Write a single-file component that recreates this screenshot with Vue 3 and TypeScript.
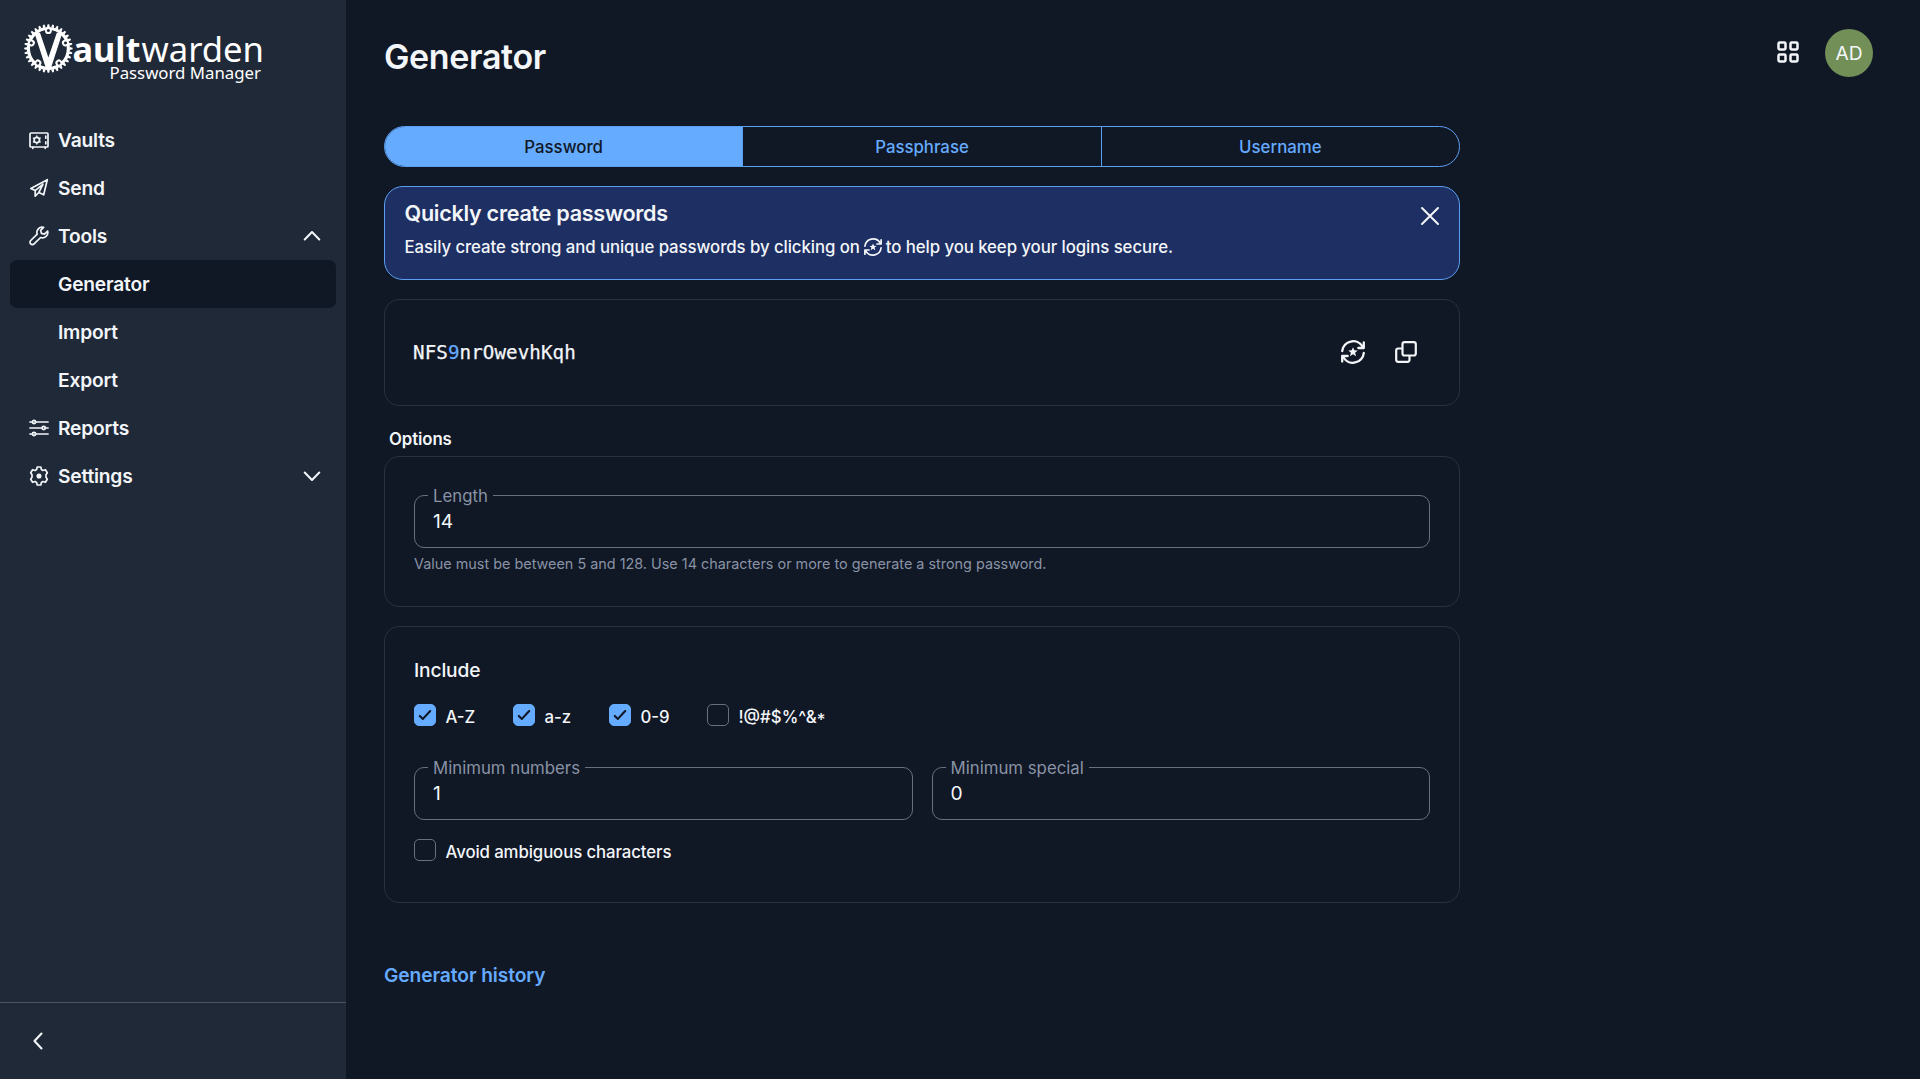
<script setup lang="ts">
interface NavItem { label: string; icon?: string; sub?: boolean; active?: boolean; arrow?: 'up' | 'down' }
const nav: NavItem[] = [
  { label: 'Vaults', icon: 'vault' },
  { label: 'Send', icon: 'send' },
  { label: 'Tools', icon: 'wrench', arrow: 'up' },
  { label: 'Generator', sub: true, active: true },
  { label: 'Import', sub: true },
  { label: 'Export', sub: true },
  { label: 'Reports', icon: 'sliders' },
  { label: 'Settings', icon: 'cog', arrow: 'down' },
]
const tabs = ['Password', 'Passphrase', 'Username']
const password = 'NFS9nrOwevhKqh'.split('')
const charsets = [
  { label: 'A-Z', on: true, w: 99 },
  { label: 'a-z', on: true, w: 96 },
  { label: '0-9', on: true, w: 98 },
  { label: '!@#$%^&*', on: false, w: 150 },
]
const teeth = Array.from({ length: 32 }, (_, i) => (i * 360) / 32)
const bolts = [0, 72, 144, 216, 288]
</script>

<template>
  <div class="app">
    <aside class="side">
      <svg class="logo" width="346" height="116" viewBox="0 0 346 116" fill="#fff">
        <g transform="translate(48.4 48.5)">
          <circle r="20" fill="none" stroke="#fff" stroke-width="3.2" />
          <path v-for="a in teeth" :key="a" d="M-1.5-21.200L-.8-24.200H.8L1.500-21.200Z" :transform="`rotate(${a})`" />
          <g v-for="b in bolts" :key="b" :transform="`rotate(${b})`">
            <circle cy="-17.800" r="3.400" />
            <circle cy="-18" r="1.500" fill="#202938" />
          </g>
          <path d="M-14-15.800H-8.400L0 9L8.400-15.800H14L2.600 19.500H-2.600Z" />
        </g>
        <text class="brand" x="72.500" y="61.500" textLength="68" lengthAdjust="spacingAndGlyphs" font-weight="700">ault</text>
        <text class="brand" x="141.500" y="61.500" textLength="122.500" lengthAdjust="spacingAndGlyphs">warden</text>
        <text class="tag" x="109.500" y="78.500" textLength="151.500" lengthAdjust="spacingAndGlyphs">Password Manager</text>
      </svg>
      <nav>
        <a v-for="n in nav" :key="n.label" class="row" :class="{ active: n.active }">
          <svg class="ico" width="20" height="20" viewBox="0 0 20 20" fill="none" stroke="#f3f6f9" stroke-width="1.7" stroke-linecap="round" stroke-linejoin="round">
            <template v-if="n.icon === 'vault'">
              <rect x="1" y="3" width="18" height="14" rx="1" />
              <path d="M3.8 17.3v1M16.2 17.3v1M16.8 6.2v2M16.8 11.8v2" />
              <circle cx="7.8" cy="10" r="2.7" />
              <path d="M7.8 6v1M7.8 13v1M4.3 8l.8.5M10.5 11.5l.8.5M4.3 12l.8-.5M10.5 8.5l.8-.5" stroke-width="1.3" />
            </template>
            <template v-else-if="n.icon === 'send'">
              <path d="M18.3 1.7L1.8 10.4l4.4 2.2v5.6l3.6-3.7 4.9 2.3zM6.2 12.6L14 6.2 9.8 14.5" />
            </template>
            <template v-else-if="n.icon === 'wrench'">
              <path d="M14.6 1.3a5.3 5.3 0 0 0-6.4 6.9L1.7 14.5a2.4 2.4 0 0 0 0 3.4 2.4 2.4 0 0 0 3.4 0l6.5-6.4a5.3 5.3 0 0 0 7-6.4l-3.2 3-3-.7-.8-3z" />
            </template>
            <template v-else-if="n.icon === 'sliders'">
              <path d="M1 4h2.6M6.4 4H19M1 10h12.2M16 10h3M1 16h2.6M6.4 16H19" />
              <circle cx="5" cy="4" r="1.6" /><circle cx="14.7" cy="10" r="1.6" /><circle cx="5" cy="16" r="1.6" />
            </template>
            <template v-else-if="n.icon === 'cog'">
              <path d="M8.2 1h3.6l.6 2.6 1.500.9 2.500-.8 1.900 3.100-1.300 1.900v2.600l1.300 1.900-1.900 3.100-2.500-.8-1.500.9-.6 2.600H8.200l-.6-2.600-1.500-.9-2.500.8-1.900-3.100 1.300-1.900V8.700l-1.300-1.900 1.900-3.100 2.500.8 1.500-.9z" />
              <circle cx="10" cy="10" r="1.700" fill="#f3f6f9" />
            </template>
          </svg>
          <span class="label">{{ n.label }}</span>
          <svg v-if="n.arrow" class="arrow" width="18" height="12" viewBox="0 0 18 12" fill="none" stroke="#f3f6f9" stroke-width="2" stroke-linecap="round" stroke-linejoin="round">
            <path :d="n.arrow === 'up' ? 'M1.700 9.500L9 2l7.300 7.500' : 'M1.700 2.500L9 10l7.300-7.500'" />
          </svg>
        </a>
      </nav>
      <div class="foot">
        <svg width="12" height="20" viewBox="0 0 12 20" fill="none" stroke="#f3f6f9" stroke-width="2.100" stroke-linecap="round" stroke-linejoin="round"><path d="M9.500 2.500L2.500 10l7 7.500" /></svg>
      </div>
    </aside>

    <main class="main">
      <header class="head">
        <h1>Generator</h1>
        <svg class="grid" width="22" height="22" viewBox="0 0 22 22" fill="none" stroke="#f3f6f9" stroke-width="2.500">
          <rect x="1.500" y="1.500" width="7" height="7" rx="1.200" /><rect x="13.500" y="1.500" width="7" height="7" rx="1.200" />
          <rect x="1.500" y="13.500" width="7" height="7" rx="1.200" /><rect x="13.500" y="13.500" width="7" height="7" rx="1.200" />
        </svg>
        <div class="avatar">AD</div>
      </header>

      <div class="content">
        <div class="tabs">
          <div v-for="(t, i) in tabs" :key="t" class="tab" :class="{ on: i === 0 }">{{ t }}</div>
        </div>

        <section class="banner">
          <div class="btext">
            <h2>Quickly create passwords</h2>
            <p>
              <span class="p1">Easily create strong and unique passwords by clicking on</span>
              <svg width="18" height="18" viewBox="0 0 24 24" fill="none" stroke="#f3f6f9" stroke-width="2.300" stroke-linecap="round" stroke-linejoin="round">
                <path d="M1.200 11A11 11 0 0 1 21.500 6.500M22.800 2.500v5.500h-5.500M22.800 13A11 11 0 0 1 2.500 17.500M1.200 21.500V16h5.500" />
                <path d="M12 7.200l1.300 3.100 3.400.3-2.600 2.200 1 3.400-3.100-1.900-3.100 1.900 1-3.400-2.600-2.200 3.400-.3z" fill="#f3f6f9" stroke="none" />
              </svg>
              <span class="p2">to help you keep your logins secure.</span>
            </p>
          </div>
          <svg class="x" width="20" height="20" viewBox="0 0 20 20" stroke="#f3f6f9" stroke-width="2" stroke-linecap="round"><path d="M2 2l16 16M18 2L2 18" /></svg>
        </section>

        <section class="card result">
          <div class="pw"><span v-for="(c, i) in password" :key="i" :class="{ digit: /\d/.test(c) }">{{ c }}</span></div>
          <svg width="26" height="26" viewBox="-1 -1 26 26" fill="none" stroke="#f3f6f9" stroke-width="2.300" stroke-linecap="round" stroke-linejoin="round">
            <path d="M1.200 11A11 11 0 0 1 21.500 6.500M22.800 2.500v5.500h-5.500M22.800 13A11 11 0 0 1 2.500 17.500M1.200 21.500V16h5.500" />
            <path d="M12 7.200l1.300 3.100 3.400.3-2.600 2.200 1 3.400-3.100-1.900-3.100 1.900 1-3.400-2.600-2.200 3.400-.3z" fill="#f3f6f9" stroke="none" />
          </svg>
          <svg width="22" height="22" viewBox="0 0 22 22" fill="none" stroke="#f3f6f9" stroke-width="2.200" stroke-linejoin="round">
            <rect x="7.500" y="1.200" width="13.300" height="13.300" rx="2" />
            <path d="M7.500 7.500H3.200a2 2 0 0 0-2 2v9.300a2 2 0 0 0 2 2h9.300a2 2 0 0 0 2-2V14.500" />
          </svg>
        </section>

        <h3>Options</h3>
        <section class="card length">
          <fieldset class="field"><legend>Length</legend><div class="val">14</div></fieldset>
          <p class="hint">Value must be between 5 and 128. Use 14 characters or more to generate a strong password.</p>
        </section>

        <section class="card include">
          <h4>Include</h4>
          <div class="checks">
            <label v-for="c in charsets" :key="c.label" class="check" :style="{ width: c.w + 'px' }">
              <span class="box" :class="{ on: c.on }">
                <svg v-if="c.on" width="14" height="14" viewBox="0 0 14 14" fill="none" stroke="#101624" stroke-width="2.100" stroke-linecap="round" stroke-linejoin="round"><path d="M1.800 7.900l3.100 3L12.200 3" /></svg>
              </span>
              <span class="ctext">{{ c.label.replace('*', '') }}<span v-if="c.label.endsWith('*')" class="star">*</span></span>
            </label>
          </div>
          <div class="pair">
            <fieldset class="field"><legend>Minimum numbers</legend><div class="val">1</div></fieldset>
            <fieldset class="field"><legend>Minimum special</legend><div class="val">0</div></fieldset>
          </div>
          <label class="check avoid"><span class="box"></span><span class="ctext">Avoid ambiguous characters</span></label>
        </section>

        <a class="history">Generator history</a>
      </div>
    </main>
  </div>
</template>

<style>
body { margin: 0; background: #101725; }
</style>

<style scoped>
* { box-sizing: border-box; }
.app { display: flex; width: 1920px; height: 1079px; overflow: hidden; background: #101725; color: #f3f6f9; font-family: Inter, sans-serif; }
h1, h2, h3, h4, p { margin: 0; }
svg { display: block; flex: none; }
.side { width: 346px; flex: none; background: #202938; display: flex; flex-direction: column; }
.brand { font-family: "Noto Sans", sans-serif; font-size: 34px; }
.tag { font-family: "Noto Sans", sans-serif; font-size: 17px; }
nav { flex: 1; padding: 0 10px; }
.row { display: flex; align-items: center; height: 48px; padding: 0 15px 0 19px; border-radius: 7px; font-size: 19.2px; font-weight: 600; letter-spacing: -0.2px; }
.row.active { background: #101725; }
.label { margin-left: 9px; flex: 1; }
.foot { height: 77px; border-top: 1px solid #4b5563; padding: 28px 0 0 31.500px; }
.main { flex: 1; padding-left: 38px; }
.head { display: flex; align-items: flex-start; height: 126px; padding-right: 47px; }
h1 { flex: 1; font-size: 34px; font-weight: 600; line-height: 42px; margin-top: 36px; letter-spacing: -0.35px; }
.grid { margin: 41px 26px 0 0; }
.avatar { width: 48px; height: 48px; margin-top: 29px; border-radius: 50%; background: #728f57; text-align: center; font-size: 19.200px; line-height: 48px; }
.content { width: 1076px; }
.tabs { display: flex; height: 41px; border: 1px solid #5b9ff2; border-radius: 21px; overflow: hidden; }
.tab { flex: 1; text-align: center; line-height: 40px; font-size: 16.800px; font-weight: 500; color: #65abff; border-right: 1px solid #5b9ff2; }
.tab:last-child { border-right: 0; }
.tab.on { background: #65abff; color: #101725; }
.banner { display: flex; justify-content: space-between; margin-top: 19px; height: 94px; padding: 12px 19.500px 0; border: 1px solid #5b9ff2; border-radius: 19px; background: #1e2f63; }
h2 { font-size: 21.600px; font-weight: 600; line-height: 28px; letter-spacing: -0.29px; }
.banner p { display: flex; align-items: center; margin-top: 8px; font-size: 16.800px; line-height: 24px; font-weight: 500; letter-spacing: -0.07px; }
.banner p svg { margin: 0 4px 0 4px; }
.x { margin-top: 7px; }
.card { border: 1px solid #263141; border-radius: 15px; }
.result { display: flex; align-items: center; height: 107px; margin-top: 19px; padding: 0 42px 1px 28px; gap: 29px; }
.pw { flex: 1; font-family: "DejaVu Sans Mono", monospace; font-size: 19.200px; letter-spacing: 0.07px; -webkit-text-stroke: 0.250px currentColor; }
.digit { color: #65abff; }
h3 { margin: 23px 0 6px 5px; font-size: 16.800px; line-height: 21px; font-weight: 600; letter-spacing: -0.1px; }
.length { height: 151px; padding: 25px 29px 0; }
.field { height: 66px; margin: 0; padding: 0 0 0 12px; min-width: 0; border: 1px solid #667082; border-radius: 10px; flex: 1; }
.field legend { padding: 2px 5px 0; margin-left: 1px; font-size: 16.800px; line-height: 24px; color: #8993a5; }
.val { padding-left: 6px; font-size: 19.200px; line-height: 26px; }
.hint { margin-top: 7px; font-size: 14.400px; line-height: 18px; color: #8993a5; }
.include { margin-top: 19px; height: 277px; padding: 30px 29px 0; }
h4 { font-size: 19.200px; font-weight: 500; line-height: 26px; letter-spacing: -0.15px; }
.checks { display: flex; margin-top: 21px; }
.check { display: flex; height: 24px; }
.box { width: 22px; height: 22px; flex: none; border: 1px solid #667082; border-radius: 5px; display: flex; align-items: center; justify-content: center; }
.box.on { background: #65abff; border-color: #65abff; }
.ctext { margin-left: 9.500px; font-size: 16.800px; line-height: 26px; font-weight: 500; white-space: nowrap; }
.star { display: inline-block; line-height: 1; vertical-align: -3px; }
.pair { display: flex; gap: 19px; margin-top: 26px; }
.avoid { margin-top: 19px; letter-spacing: -0.1px; }
.history { display: block; margin-top: 60px; font-size: 19.200px; font-weight: 600; line-height: 24px; color: #65abff; letter-spacing: -0.08px; }
</style>
